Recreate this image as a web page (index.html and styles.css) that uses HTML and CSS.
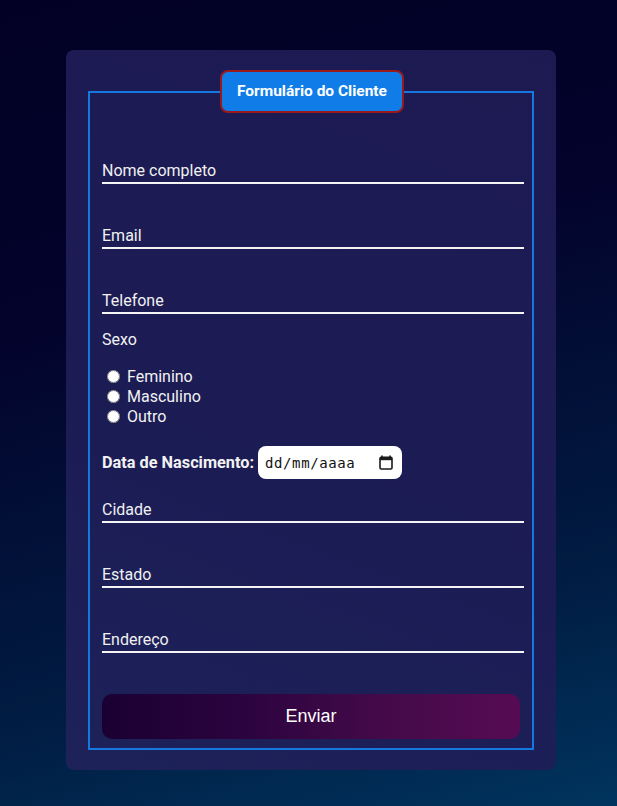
FILE: index.html
```html
<!DOCTYPE html>
<html lang="pt-BR">
<head>
<meta charset="utf-8">
<title>Formulário do Cliente</title>
<link rel="stylesheet" href="styles.css">
</head>
<body>
<main class="card">
  <form class="form">
    <fieldset class="box">
      <legend class="title">Formulário do Cliente</legend>
      <input class="line first" type="text" placeholder="Nome completo">
      <input class="line" type="email" placeholder="Email">
      <input class="line" type="tel" placeholder="Telefone">
      <div class="group-label">Sexo</div>
      <div class="radios">
        <label class="radio"><input type="radio" name="sexo"> Feminino</label>
        <label class="radio"><input type="radio" name="sexo"> Masculino</label>
        <label class="radio"><input type="radio" name="sexo"> Outro</label>
      </div>
      <div class="birth">
        <span class="birth-label">Data de Nascimento:</span>
        <span class="date">
          <span class="date-text">dd/mm/aaaa</span>
          <svg class="cal" width="14" height="15" viewBox="0 0 14 15"><path d="M3 0.5v2M11 0.5v2" stroke="#1a1a1a" stroke-width="1.6"/><rect x="1" y="2.2" width="12" height="11.8" rx="1.2" fill="none" stroke="#1a1a1a" stroke-width="1.6"/><rect x="1" y="2.2" width="12" height="3" fill="#1a1a1a"/></svg>
        </span>
      </div>
      <input class="line after-date" type="text" placeholder="Cidade">
      <input class="line" type="text" placeholder="Estado">
      <input class="line" type="text" placeholder="Endereço">
      <button class="submit" type="button">Enviar</button>
    </fieldset>
  </form>
</main>
</body>
</html>
```
FILE: styles.css
```css
html, body {
  margin: 0;
  padding: 0;
}
body {
  min-height: 806px;
  background: linear-gradient(165deg, #020024 0%, #03032c 35%, #011c42 75%, #00345e 100%);
  font-family: Roboto, "Noto Sans", sans-serif;
  color: #f2f2f2;
  overflow: hidden;
}
.card {
  box-sizing: border-box;
  width: 490px;
  margin: 50px 0 0 66px;
  padding: 20px 22px 20px 22px;
  background: linear-gradient(200deg, #1d1a52 0%, #1c1c55 60%, #1d2259 100%);
  border-radius: 8px;
}
.form { margin: 0; }
.box {
  margin: 0;
  padding: 0 10px 0 12px;
  border: 2px solid #1677e0;
  min-width: 0;
}
.title {
  box-sizing: border-box;
  height: 43px;
  margin: 0 auto;
  padding: 0 15px;
  background: #0f7ce8;
  border: 2px solid #9a1a1c;
  border-radius: 8px;
  color: #fff;
  font-weight: 700;
  font-size: 15.5px;
  line-height: 39px;
}
.line {
  display: block;
  box-sizing: border-box;
  width: 422px;
  height: 30px;
  margin: 35px 0 0 0;
  padding: 5px 0 0 0;
  background: transparent;
  border: none;
  border-bottom: 2px solid #f4f4f4;
  color: #fff;
  font-family: Roboto, "Noto Sans", sans-serif;
  font-size: 16px;
  outline: none;
}
.line::placeholder { color: #f0f0f0; opacity: 1; }
.line.first { margin-top: 41px; }
.group-label {
  margin-top: 16px;
  font-size: 16px;
  line-height: 20px;
}
.radios {
  margin-top: 16px;
  display: flex;
  flex-direction: column;
}
.radio {
  display: flex;
  align-items: center;
  height: 20px;
  font-size: 16px;
  white-space: pre;
}
.radio input {
  width: 13px;
  height: 13px;
  margin: 0 3px 0 5px;
}
.birth {
  margin-top: 20px;
  display: flex;
  align-items: center;
  gap: 4px;
  height: 33px;
}
.birth-label {
  font-weight: 700;
  font-size: 16.3px;
}
.date {
  box-sizing: border-box;
  width: 144px;
  height: 33px;
  display: flex;
  align-items: center;
  justify-content: space-between;
  padding: 0 9px 0 7px;
  background: #fff;
  border-radius: 8px;
}
.date-text {
  font-family: "DejaVu Sans Mono", "Liberation Mono", monospace;
  font-size: 14px;
  color: #111;
  letter-spacing: 0.6px;
}
.cal { display: block; }
.line.after-date { margin-top: 14px; }
.submit {
  display: block;
  width: 418px;
  height: 45px;
  margin: 41px 0 9px 0;
  border: none;
  border-radius: 10px;
  background: linear-gradient(90deg, #1a0032 0%, #2c043f 35%, #460a4a 70%, #560b52 100%);
  color: #fff;
  font-family: "Liberation Sans", Arial, sans-serif;
  font-size: 18px;
}
```
